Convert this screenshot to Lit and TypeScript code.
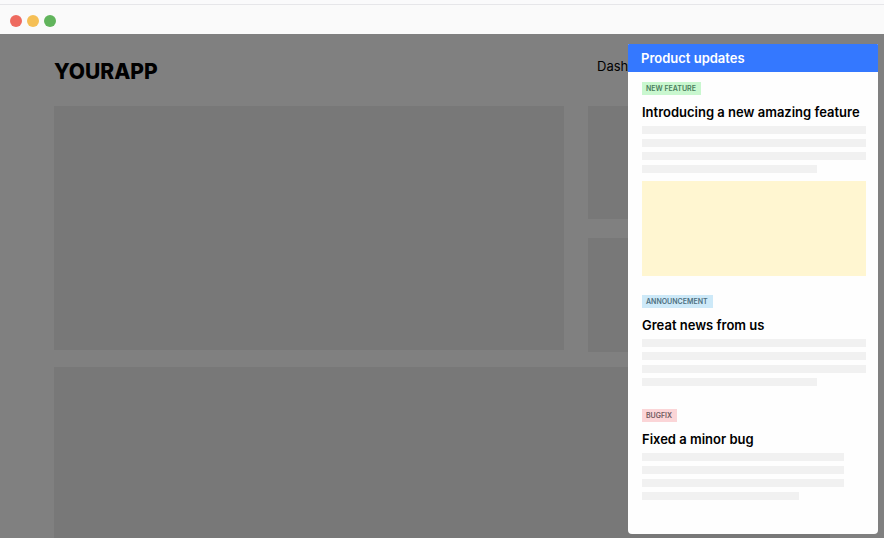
import { LitElement, html, css } from "lit";
import { customElement, property } from "lit/decorators.js";

type Tone = "green" | "blue" | "red";

@customElement("update-entry")
class UpdateEntry extends LitElement {
  @property() tone: Tone = "green";
  @property() tag = "";
  @property() heading = "";
  @property({ type: Boolean }) picture = false;
  @property({ type: Boolean, reflect: true }) narrow = false;

  static styles = css`
    :host { display: block; }
    .tag {
      display: block;
      width: fit-content;
      padding: 0 5px 0 4px;
      font-size: 7px;
      font-weight: 600;
      line-height: 13px;
    }
    .green { background: #c9f7cf; color: #4a7d5c; }
    .blue { background: #cde9f8; color: #4d7080; }
    .red { background: #fbd5d7; color: #705a60; }
    h2 {
      margin: 8px 0 5px;
      font-size: 13px;
      font-weight: 600;
      line-height: 18px;
      color: #000;
      white-space: nowrap;
    }
    .lines { display: grid; gap: 5px; margin-bottom: 4px; }
    .line { height: 8px; background: #f1f1f1; }
    .line:last-child { width: 78%; }
    :host([narrow]) .lines { width: 90%; }
    .picture { height: 95px; margin-top: 8px; background: #fff6d1; }
  `;

  render() {
    return html`
      <article>
        <span class="tag ${this.tone}">${this.tag}</span>
        <h2>${this.heading}</h2>
        <div class="lines">
          ${[0, 1, 2, 3].map(() => html`<div class="line"></div>`)}
        </div>
        ${this.picture ? html`<div class="picture"></div>` : ""}
      </article>
    `;
  }
}

@customElement("app-root")
class AppRoot extends LitElement {
  static styles = css`
    :host {
      display: flex;
      flex-direction: column;
      min-height: 100vh;
      font-family: Inter, "Liberation Sans", sans-serif;
      color: #000;
    }
    .chrome {
      display: flex;
      align-items: center;
      gap: 5px;
      box-sizing: border-box;
      height: 34px;
      padding: 7px 10px 0;
      background: linear-gradient(#fafafb 4px, #e6e6e9 4px 5px, #fafafa 5px);
    }
    .dot { width: 12px; height: 12px; border-radius: 50%; }
    .close { background: #ee6a5f; }
    .minimise { background: #f5bf55; }
    .zoom { background: #61b45c; }
    .stage {
      position: relative;
      flex: 1;
      display: flex;
      flex-direction: column;
      box-sizing: border-box;
      overflow: hidden;
      padding: 0 54px;
      background: #808080;
    }
    .top, .cards {
      display: grid;
      grid-template-columns: 510fr 242fr;
      column-gap: 24px;
    }
    .top { height: 72px; flex: none; align-items: center; }
    .brand { font-size: 21px; font-weight: 800; line-height: 28px; padding-top: 4px; }
    nav { padding: 0 9px 10px; }
    nav a { font-size: 13px; line-height: 18px; color: #000; text-decoration: none; }
    .cards { align-items: start; margin-bottom: 15px; }
    .card { background: #787878; }
    .tall { height: 244px; }
    .stack { display: grid; gap: 19px; }
    .short { height: 113px; }
    .short + .short { height: 114px; }
    .wide { flex: 1; }
    .panel {
      position: absolute;
      top: 10px;
      right: 6px;
      bottom: 4px;
      width: 250px;
      overflow: hidden;
      border-radius: 1px 1px 4px 4px;
      background: #fefefe;
    }
    .panel h1 {
      margin: 0;
      padding: 0 13px;
      font-size: 13px;
      font-weight: 600;
      line-height: 28px;
      color: #fff;
      background: #3478ff;
    }
    .entries {
      display: grid;
      grid-template-columns: minmax(0, 1fr);
      gap: 19px;
      padding: 10px 12px 10px 14px;
    }
  `;

  render() {
    return html`
      <div class="chrome">
        <span class="dot close"></span>
        <span class="dot minimise"></span>
        <span class="dot zoom"></span>
      </div>
      <div class="stage">
        <header class="top">
          <div class="brand">YOURAPP</div>
          <nav><a href="#dash">Dash</a></nav>
        </header>
        <div class="cards">
          <div class="card tall"></div>
          <div class="stack">
            <div class="card short"></div>
            <div class="card short"></div>
          </div>
        </div>
        <div class="card wide"></div>
        <aside class="panel">
          <h1>Product updates</h1>
          <div class="entries">
            <update-entry tone="green" tag="NEW FEATURE" heading="Introducing a new amazing feature" picture></update-entry>
            <update-entry tone="blue" tag="ANNOUNCEMENT" heading="Great news from us"></update-entry>
            <update-entry tone="red" tag="BUGFIX" heading="Fixed a minor bug" narrow></update-entry>
          </div>
        </aside>
      </div>
    `;
  }
}
